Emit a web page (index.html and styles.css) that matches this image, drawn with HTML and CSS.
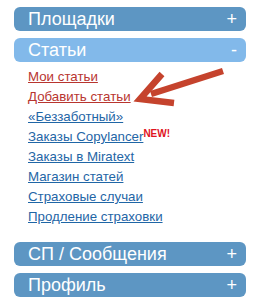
FILE: index.html
```html
<!DOCTYPE html>
<html>
<head>
<meta charset="utf-8">
<link rel="stylesheet" href="styles.css">
</head>
<body>
<div class="menu">
  <div class="head"><span>Площадки</span><span class="sign">+</span></div>
  <div class="head active"><span>Статьи</span><span class="sign">-</span></div>
  <ul class="links">
    <li><a class="red" href="#">Мои статьи</a></li>
    <li><a class="red" href="#">Добавить статьи</a></li>
    <li><a href="#">«Беззаботный»</a></li>
    <li><a href="#">Заказы Copylancer</a><span class="new">NEW!</span></li>
    <li><a href="#">Заказы в Miratext</a></li>
    <li><a href="#">Магазин статей</a></li>
    <li><a href="#">Страховые случаи</a></li>
    <li><a href="#">Продление страховки</a></li>
  </ul>
  <div class="head gap"><span>СП / Сообщения</span><span class="sign">+</span></div>
  <div class="head"><span>Профиль</span><span class="sign">+</span></div>
  <svg class="arrow" width="263" height="302" viewBox="0 0 263 302">
    <line x1="223" y1="71" x2="151" y2="94" stroke="#c5432d" stroke-width="6.5" stroke-linecap="butt"/>
    <polyline points="162,74 140,99 174,103" fill="none" stroke="#c5432d" stroke-width="6.5" stroke-linejoin="miter"/>
  </svg>
</div>
</body>
</html>
```
FILE: styles.css
```css
html, body {
  margin: 0;
  padding: 0;
  background: #ffffff;
}
.menu {
  position: relative;
  width: 232px;
  padding: 7px 0 0 14px;
  font-family: "Liberation Sans", Arial, sans-serif;
}
.head {
  display: flex;
  justify-content: space-between;
  align-items: center;
  height: 24px;
  margin-bottom: 7px;
  padding: 0 9px 0 14px;
  border-radius: 6px;
  background: #5d96c3;
  color: #ffffff;
  font-size: 18px;
  line-height: 24px;
}
.head.active {
  background: #82b9ea;
  margin-bottom: 5px;
}
.head.gap {
  margin-top: 15px;
}
.sign {
  font-size: 18px;
}
.links {
  list-style: none;
  margin: 0;
  padding: 0 0 0 14px;
}
.links li {
  height: 20px;
  line-height: 20px;
  font-size: 13.3px;
  white-space: nowrap;
}
.links a {
  color: #1f66a6;
  text-decoration: underline;
}
.links a.red {
  color: #b8352f;
}
.new {
  position: relative;
  top: -4px;
  color: #e0141e;
  font-weight: bold;
  font-size: 10px;
  line-height: 0;
}
.arrow {
  position: absolute;
  left: 0;
  top: 0;
  pointer-events: none;
}
```
